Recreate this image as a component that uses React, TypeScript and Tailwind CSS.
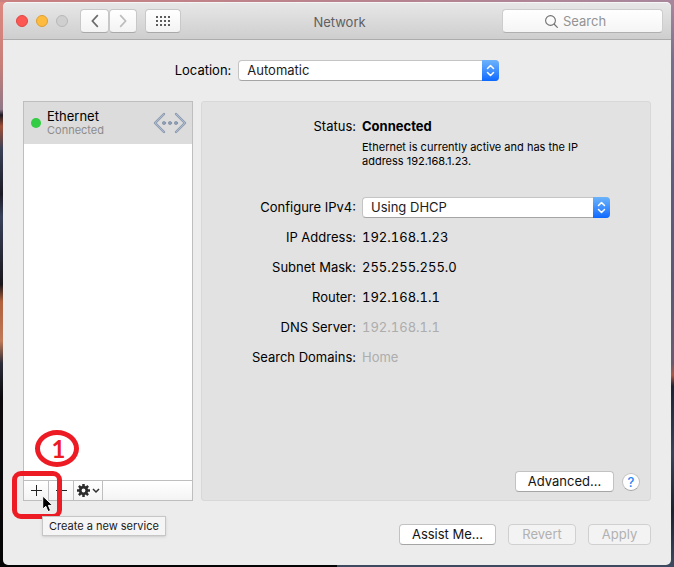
import type { ReactNode } from 'react';

interface SelectProps {
  id: string;
  value: string;
  options: string[];
  width: string;
}

const details = [
  { label: 'IP Address:', value: '192.168.1.23', dimmed: false },
  { label: 'Subnet Mask:', value: '255.255.255.0', dimmed: false },
  { label: 'Router:', value: '192.168.1.1', dimmed: false },
  { label: 'DNS Server:', value: '192.168.1.1', dimmed: true },
  { label: 'Search Domains:', value: 'Home', dimmed: true },
];

const lights = [
  { name: 'Close', color: 'bg-[#fc5753] border-[#df4744]' },
  { name: 'Minimize', color: 'bg-[#fdbc40] border-[#de9f34]' },
  { name: 'Zoom', color: 'bg-[#cfcfcf] border-[#b8b8b8]' },
];

const dots = [0, 4, 8, 12];
const teeth = [0, 45, 90, 135];

function PopupSelect({ id, value, options, width }: SelectProps) {
  return (
    <div className={`relative h-[21px] ${width}`}>
      <select
        id={id}
        defaultValue={value}
        className="block h-full w-full appearance-none rounded border border-[#c4c4c4] border-b-[#a5a5a5] bg-white pr-6 pl-2 text-[13px] leading-[19px] text-[#1c1c1c] outline-none"
      >
        {options.map((o) => (
          <option key={o}>{o}</option>
        ))}
      </select>
      <span className="pointer-events-none absolute inset-y-0 right-0 flex w-[17px] items-center justify-center rounded-r bg-linear-to-b from-[#6cb3fa] to-[#0a68ff]">
        <svg width="9" height="13" viewBox="0 0 9 13" fill="none" stroke="#fff" strokeWidth="1.5" strokeLinecap="round" strokeLinejoin="round">
          <path d="M1.5 4.5 4.5 1.5 7.5 4.5M1.5 8.5 4.5 11.5 7.5 8.5" />
        </svg>
      </span>
    </div>
  );
}

function PushButton({ children, width, disabled = false }: { children: ReactNode; width: string; disabled?: boolean }) {
  return (
    <button
      type="button"
      disabled={disabled}
      className={`h-[21px] rounded border text-[13px] leading-[19px] ${width} ${
        disabled
          ? 'border-[#d0d0d0] bg-[#f3f3f3] text-[#b1b1b1]'
          : 'border-[#c2c2c2] border-b-[#a5a5a5] bg-white text-[#141414]'
      }`}
    >
      {children}
    </button>
  );
}

function ToolbarButton({ label, width, children }: { label: string; width: string; children: ReactNode }) {
  return (
    <button
      type="button"
      aria-label={label}
      className={`flex h-6 items-center justify-center rounded border border-[#c8c8c8] border-b-[#a9a9a9] bg-linear-to-b from-white to-[#f3f3f3] ${width}`}
    >
      {children}
    </button>
  );
}

function TitleBar() {
  return (
    <header className="grid h-[38px] grid-cols-[1fr_auto_1fr] items-center rounded-t-[5px] border-t border-b border-t-[#f6f6f6] border-b-[#acacac] bg-linear-to-b from-[#e7e7e7] to-[#cecece] pr-2 pl-[13px]">
      <div className="flex items-center">
        <div className="flex gap-2">
          {lights.map((l) => (
            <button key={l.name} type="button" aria-label={l.name} className={`size-3 rounded-full border ${l.color}`} />
          ))}
        </div>
        <div className="ml-3 flex">
          <ToolbarButton label="Back" width="w-[29px]">
            <svg width="8" height="14" viewBox="0 0 8 14" fill="none" stroke="#6b6b6b" strokeWidth="1.7">
              <path d="M6.8 1.2 1.4 7 6.8 12.8" />
            </svg>
          </ToolbarButton>
          <ToolbarButton label="Forward" width="w-7">
            <svg width="8" height="14" viewBox="0 0 8 14" fill="none" stroke="#bdbdbd" strokeWidth="1.7">
              <path d="M1.2 1.2 6.6 7 1.2 12.8" />
            </svg>
          </ToolbarButton>
        </div>
        <div className="ml-2">
          <ToolbarButton label="Show All" width="w-9">
            <svg width="14" height="10" viewBox="0 0 14 10" fill="#5c5c5c">
              {dots.map((x) =>
                [0, 4, 8].map((y) => <rect key={`${x}-${y}`} x={x} y={y} width="2" height="2" />)
              )}
            </svg>
          </ToolbarButton>
        </div>
      </div>
      <h1 className="pt-[3px] text-[13px] text-[#5f5f5f]">Network</h1>
      <label className="flex h-6 w-[161px] items-center justify-self-end rounded border border-[#cdcdcd] border-b-[#b0b0b0] bg-linear-to-b from-white to-[#f5f5f5] pl-[42px]">
        <svg width="13" height="13" viewBox="0 0 13 13" fill="none" stroke="#707070" strokeWidth="1.1" className="shrink-0">
          <circle cx="5.5" cy="5.5" r="4.9" />
          <path d="M9 9 12.7 12.7" />
        </svg>
        <input
          type="text"
          aria-label="Search"
          placeholder="Search"
          className="ml-[5px] w-full min-w-0 bg-transparent pt-[2px] text-[13px] text-[#5f5f5f] outline-none placeholder:text-[#939393]"
        />
      </label>
    </header>
  );
}

function ServiceList() {
  return (
    <aside className="relative flex w-[170px] shrink-0">
      <div className="flex flex-1 flex-col border border-[#bebebe] bg-white">
        <button type="button" className="flex h-[42px] items-center bg-[#dcdcdc] pr-[5px] pl-[7px] text-left">
          <span className="size-[10px] rounded-full bg-[#33cc44]" />
          <span className="ml-[6px] flex-1">
            <span className="block text-[13px] leading-[14px] text-black">Ethernet</span>
            <span className="block text-[11px] leading-[15px] text-[#8c8c8c]">Connected</span>
          </span>
          <svg width="34" height="22" viewBox="0 0 34 22" fill="none" strokeLinecap="round" strokeLinejoin="round">
            <path d="M11 2 2 11 11 20M23 2 32 11 23 20" stroke="#7f8a9b" strokeWidth="2.4" />
            <path d="M11 2 2 11 11 20M23 2 32 11 23 20" stroke="#a9b9d2" strokeWidth="1.2" />
            <g fill="#8fa0ba" stroke="#76839a" strokeWidth="0.6">
              <circle cx="11" cy="11" r="1.6" />
              <circle cx="17" cy="11" r="1.6" />
              <circle cx="23" cy="11" r="1.6" />
            </g>
          </svg>
        </button>
        <div className="flex-1" />
        <div className="flex h-5 border-t border-[#bebebe] bg-linear-to-b from-white to-[#f4f4f4]">
          <button type="button" aria-label="Create a new service" className="flex w-[25px] items-center justify-center border-r border-[#bebebe]">
            <svg width="11" height="11" viewBox="0 0 11 11" fill="none" stroke="#222">
              <path d="M0 5.5H11M5.5 0V11" />
            </svg>
          </button>
          <button type="button" aria-label="Delete the selected service" className="flex w-[25px] items-center justify-center border-r border-[#bebebe]">
            <svg width="11" height="11" viewBox="0 0 11 11" fill="none" stroke="#222">
              <path d="M0 5.5H11" />
            </svg>
          </button>
          <button type="button" aria-label="Service actions" className="flex w-[29px] items-center justify-center gap-[2px] border-r border-[#bebebe]">
            <svg width="13" height="13" viewBox="0 0 13 13" fill="none" stroke="#2c2c2c">
              <circle cx="6.5" cy="6.5" r="3.3" strokeWidth="2.8" />
              {teeth.map((a) => (
                <path key={a} d="M6.5 0V3M6.5 10V13" strokeWidth="2.5" transform={`rotate(${a} 6.5 6.5)`} />
              ))}
            </svg>
            <svg width="8" height="6" viewBox="0 0 8 6" fill="none" stroke="#303030" strokeWidth="1.5">
              <path d="M1 1 4 4 7 1" />
            </svg>
          </button>
        </div>
      </div>

      {/* step marker */}
      <span className="absolute bottom-[34px] left-3 flex h-[37px] w-11 items-center justify-center rounded-[50%] border-5 border-[#ed1c24] pl-[3px] font-[Lato,sans-serif] text-[24px] leading-6 font-bold text-[#ed1c24]">
        1
      </span>
      <span className="absolute -bottom-[18px] -left-[11px] h-12 w-[50px] rounded-[9px] border-5 border-[#ed1c24]" />

      <span role="tooltip" className="absolute -bottom-[35px] left-[19px] h-5 border border-[#c6c6c6] bg-[#f5f5f5] px-[6px] text-[11px] leading-[18px] whitespace-nowrap text-[#1a1a1a] shadow">
        Create a new service
      </span>
      <svg width="12" height="18" viewBox="0 0 12 18" className="absolute -bottom-[12px] left-[19px]">
        <path d="M.7 1V14.2L3.8 11.3 6 16.6 8.6 15.5 6.4 10.4H10.7Z" fill="#000" stroke="#fff" strokeWidth="1" />
      </svg>
    </aside>
  );
}

function StatusPanel() {
  return (
    <section className="flex min-w-0 flex-1 flex-col rounded-[3px] border border-[#d8d8d8] bg-[#e2e2e2] pt-[14px] pb-2">
      <dl className="grid grid-cols-[154px_1fr] gap-x-[6px] text-[13px] leading-5 text-black">
        <dt className="text-right">Status:</dt>
        <dd>
          <strong className="block font-bold">Connected</strong>
          <p className="mt-1 mb-6 max-w-[240px] text-[11px] leading-[14px]">
            Ethernet is currently active and has the IP address 192.168.1.23.
          </p>
        </dd>
        <dt className="flex h-[30px] items-center justify-end">
          <label htmlFor="ipv4">Configure IPv4:</label>
        </dt>
        <dd className="flex h-[30px] items-center">
          <PopupSelect id="ipv4" value="Using DHCP" options={['Using DHCP', 'Manually', 'Off']} width="w-[248px]" />
        </dd>
        {details.map((d) => (
          <div key={d.label} className="col-span-2 grid grid-cols-subgrid leading-[30px]">
            <dt className="text-right">{d.label}</dt>
            <dd className={`tabular-nums ${d.dimmed ? 'text-[#adadad]' : ''}`}>{d.value}</dd>
          </div>
        ))}
      </dl>
      <div className="mt-auto flex items-center justify-end gap-2 pr-[10px]">
        <PushButton width="w-[99px]">Advanced...</PushButton>
        <button type="button" aria-label="Help" className="size-[18px] rounded-full border border-[#c2c2c2] border-b-[#a5a5a5] bg-white text-[13px] leading-4 font-medium text-[#2485f5]">
          ?
        </button>
      </div>
    </section>
  );
}

export default function App() {
  return (
    <div className="relative flex min-h-screen flex-col bg-linear-to-r from-[#c98080] to-[#a8879c] px-[3px] py-[2px] font-[Inter,sans-serif]">
      {/* desktop wallpaper around the window */}
      <div className="absolute inset-y-0 left-0 w-1/2 bg-[linear-gradient(#dd8880_0%,#c87f78_11%,#8f7888_19%,#1d1a22_20%,#a05038_22%,#3a4257_26%,#1b1b24_34%,#39425a_38%,#1a171c_50%,#b0603c_53%,#c07a58_60%,#2a2c38_64%,#0c0a0d_70%,#050405_100%)] mt-[2px]" />
      <div className="absolute inset-y-0 right-0 w-1/2 bg-[linear-gradient(#a8879c_0%,#77708c_10%,#5e5d7c_30%,#5b5873_50%,#6a5a70_64%,#a85a48_66%,#1c2333_68%,#3a4358_80%,#1b2230_90%,#3d4a60_100%)] mt-[2px]" />
      <main className="relative flex flex-1 flex-col rounded-[5px] bg-[#ececec]">
        <TitleBar />
        <div className="mt-5 flex items-center justify-center gap-[7px]">
          <label htmlFor="location" className="text-[13px] text-black">Location:</label>
          <PopupSelect id="location" value="Automatic" options={['Automatic', 'Edit Locations...']} width="w-[261px]" />
        </div>
        <div className="mt-5 flex flex-1 gap-2 px-5">
          <ServiceList />
          <StatusPanel />
        </div>
        <footer className="mt-[23px] mb-5 flex justify-end gap-3 px-5">
          <PushButton width="w-[97px]">Assist Me...</PushButton>
          <PushButton width="w-[68px]" disabled>Revert</PushButton>
          <PushButton width="w-[63px]" disabled>Apply</PushButton>
        </footer>
      </main>
    </div>
  );
}
